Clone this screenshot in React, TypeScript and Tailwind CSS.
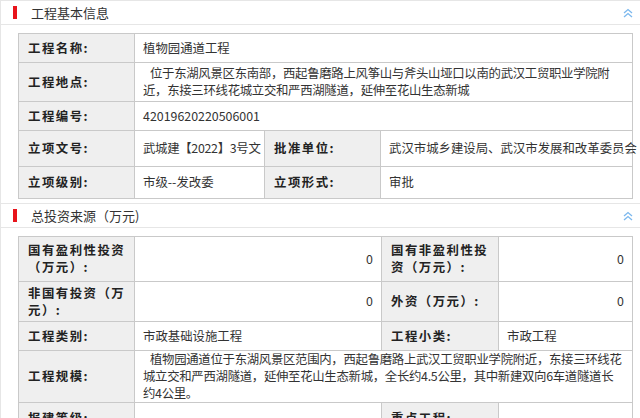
import React from "react";

const L = "bg-[#efefef] border border-[#c9c9c9] pl-[9px] pr-[2px] font-bold tracking-[1.5px] text-[#222] align-middle";
const V = "border border-[#c9c9c9] px-[8px] text-[#333] align-middle";

function Header({ title }: { title: string }) {
  return (
    <div className="h-[25px] flex items-center border-y border-[#e6e6e6] bg-white">
      <div className="w-[4px] h-[13px] bg-[#e8141b] ml-[12px]" />
      <div className="ml-[14px] text-[13px] text-[#333]">{title}</div>
      <div className="flex-1" />
      <svg width="12" height="12" viewBox="0 0 12 12" className="mr-[6px]" fill="none" stroke="#7cb8ee" strokeWidth="1.3">
        <path d="M2 6 L6 2.5 L10 6" />
        <path d="M2 10 L6 6.5 L10 10" />
      </svg>
    </div>
  );
}

export default function App() {
  return (
    <div className="w-[640px] h-[418px] overflow-hidden bg-white border-l border-[#e6e6e6] text-[12.4px] leading-[17px]" style={{ fontFamily: '"Noto Sans CJK SC", "Liberation Sans", sans-serif' }}>
      <Header title="工程基本信息" />
      <div className="pl-[17px] pr-[8px] pt-[8px] pb-[4px]">
        <table className="w-[615px] border-collapse table-fixed">
          <colgroup>
            <col className="w-[116px]" />
            <col className="w-[130px]" />
            <col className="w-[116px]" />
            <col />
          </colgroup>
          <tbody>
            <tr className="h-[29px]"><td className={L}>工程名称:</td><td className={V} colSpan={3}>植物园通道工程</td></tr>
            <tr className="h-[39px]"><td className={L}>工程地点:</td><td className={V + " px-[1px] indent-[7px] tracking-[-0.3px]"} colSpan={3}>位于东湖风景区东南部，西起鲁磨路上风筝山与斧头山垭口以南的武汉工贸职业学院附近，东接三环线花城立交和严西湖隧道，延伸至花山生态新城</td></tr>
            <tr className="h-[29px]"><td className={L}>工程编号:</td><td className={V} colSpan={3}>42019620220506001</td></tr>
            <tr className="h-[36px]"><td className={L}>立项文号:</td><td className={V + " whitespace-nowrap tracking-[-0.3px]"}>武城建【2022】3号文</td><td className={L}>批准单位:</td><td className={V + " whitespace-nowrap"}>武汉市城乡建设局、武汉市发展和改革委员会</td></tr>
            <tr className="h-[32px]"><td className={L}>立项级别:</td><td className={V}>市级--发改委</td><td className={L}>立项形式:</td><td className={V}>审批</td></tr>
          </tbody>
        </table>
      </div>
      <Header title="总投资来源（万元)" />
      <div className="pl-[17px] pr-[8px] pt-[8px]">
        <table className="w-[615px] border-collapse table-fixed">
          <colgroup>
            <col className="w-[116px]" />
            <col className="w-[247px]" />
            <col className="w-[117px]" />
            <col />
          </colgroup>
          <tbody>
            <tr className="h-[45px]"><td className={L}>国有盈利性投资（万元）:</td><td className={V + " text-right"}>0</td><td className={L}>国有非盈利性投资（万元）:</td><td className={V + " text-right"}>0</td></tr>
            <tr className="h-[40px]"><td className={L}>非国有投资（万元）:</td><td className={V + " text-right"}>0</td><td className={L}>外资（万元）:</td><td className={V + " text-right"}>0</td></tr>
            <tr className="h-[29px]"><td className={L}>工程类别:</td><td className={V}>市政基础设施工程</td><td className={L}>工程小类:</td><td className={V}>市政工程</td></tr>
            <tr className="h-[40px]"><td className={L}>工程规模:</td><td className={V + " px-[1px] indent-[7px] tracking-[-0.3px]"} colSpan={3}>植物园通道位于东湖风景区范围内，西起鲁磨路上武汉工贸职业学院附近，东接三环线花城立交和严西湖隧道，延伸至花山生态新城，全长约4.5公里，其中新建双向6车道隧道长约4公里。</td></tr>
            <tr className="h-[31px]"><td className={L}>报建等级:</td><td className={V}></td><td className={L}>重点工程:</td><td className={V}></td></tr>
          </tbody>
        </table>
      </div>
    </div>
  );
}
